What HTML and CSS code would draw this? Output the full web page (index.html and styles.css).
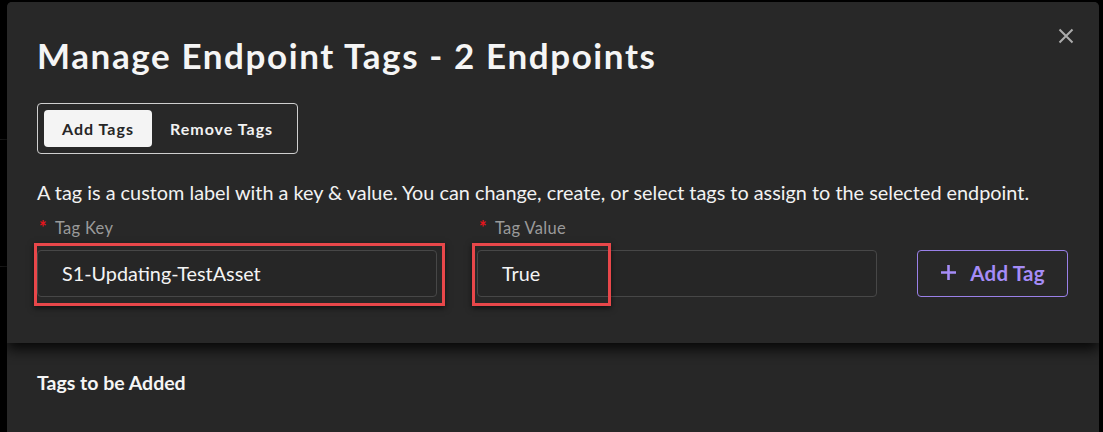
FILE: index.html
```html
<!DOCTYPE html>
<html>
<head>
<meta charset="utf-8">
<link rel="stylesheet" href="styles.css">
</head>
<body>
<div class="page">
  <div class="edge">
    <span class="edge-line l1"></span>
    <span class="edge-line l2"></span>
  </div>
  <div class="modal">
    <div class="header">
      <button class="close" aria-label="Close">
        <svg width="16" height="16" viewBox="0 0 16 16"><path d="M1.5 1.5 L14.5 14.5 M14.5 1.5 L1.5 14.5" stroke="#ababab" stroke-width="2" fill="none"/></svg>
      </button>
      <h1 class="title">Manage Endpoint Tags - 2 Endpoints</h1>
      <div class="segmented">
        <span class="seg seg-active">Add Tags</span>
        <span class="seg">Remove Tags</span>
      </div>
      <p class="desc">A tag is a custom label with a key &amp; value. You can change, create, or select tags to assign to the selected endpoint.</p>
      <div class="form-row">
        <div class="field field-key">
          <label class="label"><span class="req">*</span>Tag Key</label>
          <div class="input-wrap">
            <div class="input input-key">S1-Updating-TestAsset</div>
            <span class="mark mark-key"></span>
          </div>
        </div>
        <div class="field field-value">
          <label class="label"><span class="req">*</span>Tag Value</label>
          <div class="input-wrap">
            <div class="input input-value">True</div>
            <span class="mark mark-value"></span>
          </div>
        </div>
        <button class="add-btn">
          <svg width="17" height="17" viewBox="0 0 17 17"><path d="M8.5 1 V16 M1 8.5 H16" stroke="#a58cf7" stroke-width="2.6" fill="none"/></svg>
          <span>Add Tag</span>
        </button>
      </div>
    </div>
    <div class="body">
      <h2 class="section-title">Tags to be Added</h2>
    </div>
  </div>
</div>
</body>
</html>
```
FILE: styles.css
```css
* { box-sizing: border-box; }
html, body { margin: 0; padding: 0; }
body {
  background: #000;
  font-family: Lato, "Open Sans", sans-serif;
  width: 1103px;
  height: 432px;
  overflow: hidden;
}
.page {
  display: flex;
  height: 432px;
  padding: 2px 4px 0 0;
}
.edge {
  width: 7px;
  flex: none;
  position: relative;
  overflow: hidden;
}
.edge-line {
  position: absolute;
  left: 0;
  width: 7px;
  height: 1px;
  background: #1c1c1c;
}
.l1 { top: 137px; }
.l2 { top: 264px; }
.modal {
  flex: 1;
  background: #272727;
  border-radius: 5px 5px 0 0;
  display: flex;
  flex-direction: column;
}
.header {
  position: relative;
  z-index: 1;
  height: 341px;
  background: #282828;
  border-radius: 5px 5px 0 0;
  padding: 25px 30px 0 30px;
  box-shadow: 0 6px 14px rgba(0, 0, 0, 0.85);
}
.close {
  position: absolute;
  top: 26px;
  right: 25px;
  background: none;
  border: 0;
  padding: 0;
  width: 16px;
  height: 16px;
  display: flex;
}
.title {
  margin: 0;
  font-size: 35px;
  font-weight: 700;
  line-height: 56px;
  color: #f5f5f5;
  letter-spacing: 1.6px;
}
.segmented {
  margin-top: 20px;
  display: inline-flex;
  align-items: center;
  border: 1px solid #cfcfcf;
  border-radius: 4px;
  padding: 6px;
  height: 51px;
}
.seg {
  display: flex;
  align-items: center;
  height: 37px;
  padding: 0 18px;
  font-size: 16px;
  font-weight: 700;
  letter-spacing: 1px;
  color: #f2f2f2;
  border-radius: 4px;
}
.seg-active {
  background: #f4f4f4;
  color: #262626;
}
.desc {
  margin: 26px 0 0 0;
  font-size: 19.85px;
  line-height: 24px;
  color: #f2f2f2;
  white-space: nowrap;
}
.form-row {
  margin-top: 14px;
  display: flex;
  align-items: flex-end;
  gap: 40px;
}
.field {
  display: flex;
  flex-direction: column;
}
.field-key { width: 400px; }
.field-value { width: 400px; }
.label {
  font-size: 16.5px;
  line-height: 20px;
  letter-spacing: 0.3px;
  color: #9a9a9a;
  margin-bottom: 12px;
  display: flex;
  align-items: flex-start;
}
.req {
  color: #e8141c;
  font-size: 18px;
  line-height: 18px;
  font-weight: 700;
  margin: 0 8px 0 2px;
}
.input-wrap { position: relative; }
.input {
  height: 47px;
  border: 1px solid #474747;
  border-radius: 4px;
  background: #262626;
  color: #f4f4f4;
  font-size: 19.8px;
  display: flex;
  align-items: center;
  padding-bottom: 1px;
}
.input-key { padding-left: 24px; }
.input-value { padding-left: 24px; }
.mark {
  position: absolute;
  border: 3px solid #e8474a;
  box-shadow: 0 2px 6px rgba(0, 0, 0, 0.6);
  pointer-events: none;
}
.mark-key {
  left: -3px;
  top: -7px;
  width: 411px;
  height: 63px;
}
.mark-value {
  left: -5px;
  top: -7px;
  width: 139px;
  height: 63px;
}
.add-btn {
  width: 151px;
  height: 47px;
  background: transparent;
  border: 1px solid #9a80e8;
  border-radius: 4px;
  color: #a58cf7;
  font-family: Lato, sans-serif;
  font-size: 20.5px;
  font-weight: 700;
  letter-spacing: 0.2px;
  display: flex;
  align-items: center;
  justify-content: center;
  gap: 13px;
  padding: 0 0 2px 0;
}
.body {
  flex: 1;
  padding: 28px 30px 0 30px;
}
.section-title {
  margin: 0;
  font-size: 19.5px;
  font-weight: 700;
  line-height: 24px;
  color: #f5f5f5;
}
```
